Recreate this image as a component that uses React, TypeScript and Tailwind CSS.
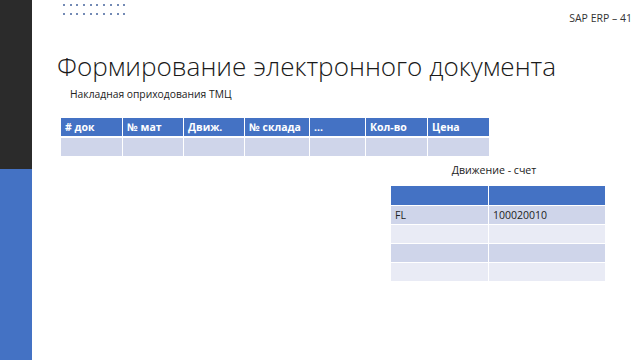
import React from 'react';

const DOC_COLUMNS: { label: string; width: string }[] = [
  { label: '# док', width: 'w-[61px]' },
  { label: '№ мат', width: 'w-[60px]' },
  { label: 'Движ.', width: 'w-[60px]' },
  { label: '№ склада', width: 'w-[64px]' },
  { label: '...', width: 'w-[55px]' },
  { label: 'Кол-во', width: 'w-[61px]' },
  { label: 'Цена', width: 'w-[61px]' },
];

const ACCOUNT_ROWS: [string, string][] = [
  ['FL', '100020010'],
  ['', ''],
  ['', ''],
  ['', ''],
];

const Dots: React.FC = () => (
  <div className="flex flex-col gap-[7px] pt-[4px]">
    {[0, 1].map((row) => (
      <div key={row} className="flex gap-[4.7px]">
        {Array.from({ length: 10 }).map((_, i) => (
          <span key={i} className="block w-[2px] h-[2px] rounded-full bg-[#44639c]" />
        ))}
      </div>
    ))}
  </div>
);

const App: React.FC = () => {
  return (
    <div className="flex w-[640px] h-[360px] bg-white overflow-hidden font-['Open_Sans',sans-serif] text-[#262626]">
      {/* Боковая полоса */}
      <div className="flex flex-col w-[32px] shrink-0">
        <div className="h-[169px] bg-[#2b2b2b]" />
        <div className="flex-1 bg-[#4472c4]" />
      </div>

      <div className="flex-1 flex flex-col">
        {/* Верх: точки и номер слайда */}
        <div className="flex justify-between pl-[31px] pr-[8px]">
          <Dots />
          <div className="pt-[11px] text-[10.5px] leading-[14px] text-[#333]">SAP ERP – 41</div>
        </div>

        <h1 className="pl-[25px] mt-[24px] text-[26.1px] leading-[34px] font-light text-[#1a1a1a]">
          Формирование электронного документа
        </h1>

        <div className="pl-[38px] mt-[4px] text-[10.3px] leading-[14px] text-[#222]">
          Накладная оприходования ТМЦ
        </div>

        {/* Таблица документа */}
        <div className="pl-[29px] mt-[17px]">
          <div className="flex gap-[1px]">
            {DOC_COLUMNS.map((col) => (
              <div key={col.label} className={`${col.width} flex flex-col gap-[2px]`}>
                <div className="h-[18px] bg-[#4472c4] pl-[4px] text-[10.5px] leading-[18px] font-bold text-white">
                  {col.label}
                </div>
                <div className="h-[18px] bg-[#cfd5ea]" />
              </div>
            ))}
          </div>
        </div>

        {/* Движение - счет */}
        <div className="pl-[359px] mt-[7px]">
          <div className="w-[206px] text-center text-[10.6px] leading-[14px] text-[#222]">Движение - счет</div>
          <div className="mt-[9px] w-[214px] flex flex-col gap-[1px]">
            <div className="flex gap-[1px] h-[19px]">
              <div className="w-[97px] bg-[#4472c4]" />
              <div className="flex-1 bg-[#4472c4]" />
            </div>
            {ACCOUNT_ROWS.map(([move, account], i) => (
              <div key={i} className="flex gap-[1px] h-[18px] text-[10.5px] leading-[18px] text-[#222]">
                <div className={`w-[97px] pl-[4px] ${i % 2 === 0 ? 'bg-[#cfd5ea]' : 'bg-[#e9ebf5]'}`}>{move}</div>
                <div className={`flex-1 pl-[4px] ${i % 2 === 0 ? 'bg-[#cfd5ea]' : 'bg-[#e9ebf5]'}`}>{account}</div>
              </div>
            ))}
          </div>
        </div>
      </div>
    </div>
  );
};

export default App;
